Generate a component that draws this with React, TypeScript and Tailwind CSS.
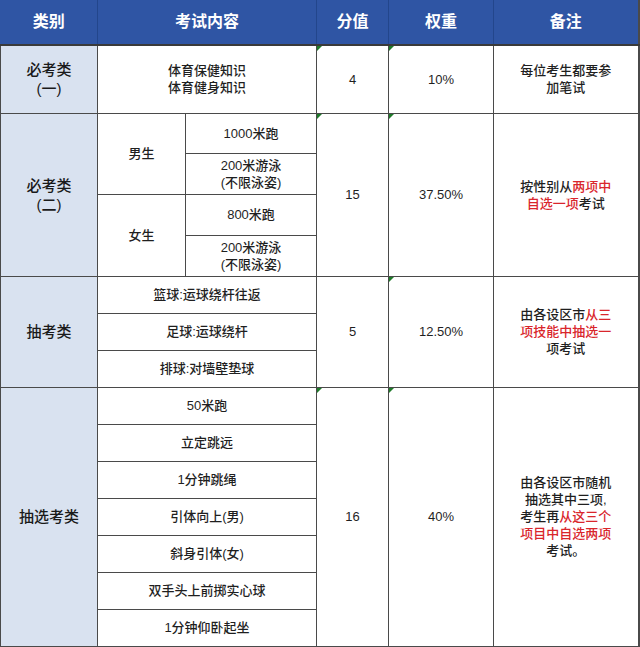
import React from 'react'

const font = 'font-["Liberation_Sans","Noto_Sans_CJK_SC",sans-serif]'
const cell = 'border border-[#4a4a4a] text-center align-middle p-0'
const head = 'border-x border-x-[#23468c] border-b-2 border-b-[#3a3a3a] text-center align-middle text-[16px] font-semibold text-white p-0'
const cat = `${cell} bg-[#d9e2f0] text-[15px] leading-[19px] font-medium text-[#1a1a1a]`
const body = `${cell} text-[13px] leading-[17px] font-medium text-[#1f1f1f]`

function Flag() {
  return (
    <span className="absolute left-0 top-0 h-0 w-0 border-t-[5px] border-r-[5px] border-t-[#1f7a2a] border-r-transparent" />
  )
}

const Red = ({ children }: { children: React.ReactNode }) => (
  <span className="text-[#d9262c]">{children}</span>
)

const drawItems = [
  '立定跳远',
  '1分钟跳绳',
  '引体向上(男)',
  '斜身引体(女)',
  '双手头上前掷实心球',
  '1分钟仰卧起坐',
]

export default function App() {
  return (
    <div className={`w-[640px] h-[647px] overflow-hidden bg-white ${font}`}>
      <div className="h-[45px] w-[640px] bg-[#2f55a4] absolute" />
      <table className="relative w-[638px] table-fixed border-collapse border-r-2 border-r-[#4a4a4a]">
        <colgroup>
          <col className="w-[97px]" />
          <col className="w-[88px]" />
          <col className="w-[131px]" />
          <col className="w-[72px]" />
          <col className="w-[105px]" />
          <col className="w-[145px]" />
        </colgroup>
        <tbody>
          <tr className="h-[45px] bg-[#2f55a4]">
            <td className={`${head} border-l-0`}>类别</td>
            <td className={head} colSpan={2}>考试内容</td>
            <td className={head}>分值</td>
            <td className={head}>权重</td>
            <td className={`${head} border-r-0`}>备注</td>
          </tr>

          <tr className="h-[68px]">
            <td className={cat}>
              必考类
              <br />
              (一)
            </td>
            <td className={body} colSpan={2}>
              体育保健知识
              <br />
              体育健身知识
            </td>
            <td className={`${body} relative`}>
              <Flag />4
            </td>
            <td className={`${body} relative`}>
              <Flag />10%
            </td>
            <td className={body}>
              每位考生都要参
              <br />
              加笔试
            </td>
          </tr>

          <tr className="h-[40px]">
            <td className={cat} rowSpan={4}>
              必考类
              <br />
              (二)
            </td>
            <td className={body} rowSpan={2}>男生</td>
            <td className={body}>1000米跑</td>
            <td className={`${body} relative`} rowSpan={4}>
              <Flag />15
            </td>
            <td className={`${body} relative`} rowSpan={4}>
              <Flag />37.50%
            </td>
            <td className={body} rowSpan={4}>
              按性别从<Red>两项中</Red>
              <br />
              <Red>自选一项</Red>考试
            </td>
          </tr>
          <tr className="h-[41px]">
            <td className={body}>
              200米游泳
              <br />
              (不限泳姿)
            </td>
          </tr>
          <tr className="h-[41px]">
            <td className={body} rowSpan={2}>女生</td>
            <td className={body}>800米跑</td>
          </tr>
          <tr className="h-[41px]">
            <td className={body}>
              200米游泳
              <br />
              (不限泳姿)
            </td>
          </tr>

          <tr className="h-[37px]">
            <td className={cat} rowSpan={3}>抽考类</td>
            <td className={body} colSpan={2}>篮球:运球绕杆往返</td>
            <td className={body} rowSpan={3}>5</td>
            <td className={`${body} relative`} rowSpan={3}>
              <Flag />12.50%
            </td>
            <td className={body} rowSpan={3}>
              由各设区市<Red>从三</Red>
              <br />
              <Red>项技能中抽选一</Red>
              <br />
              项考试
            </td>
          </tr>
          <tr className="h-[37px]">
            <td className={body} colSpan={2}>足球:运球绕杆</td>
          </tr>
          <tr className="h-[37px]">
            <td className={body} colSpan={2}>排球:对墙壁垫球</td>
          </tr>

          <tr className="h-[37px]">
            <td className={cat} rowSpan={7}>抽选考类</td>
            <td className={body} colSpan={2}>50米跑</td>
            <td className={`${body} relative`} rowSpan={7}>
              <Flag />16
            </td>
            <td className={`${body} relative`} rowSpan={7}>
              <Flag />40%
            </td>
            <td className={body} rowSpan={7}>
              由各设区市随机
              <br />
              抽选其中三项,
              <br />
              考生再<Red>从这三个</Red>
              <br />
              <Red>项目中自选两项</Red>
              <br />
              考试。
            </td>
          </tr>
          {drawItems.map((item) => (
            <tr key={item} className="h-[37px]">
              <td className={body} colSpan={2}>{item}</td>
            </tr>
          ))}
        </tbody>
      </table>
    </div>
  )
}
